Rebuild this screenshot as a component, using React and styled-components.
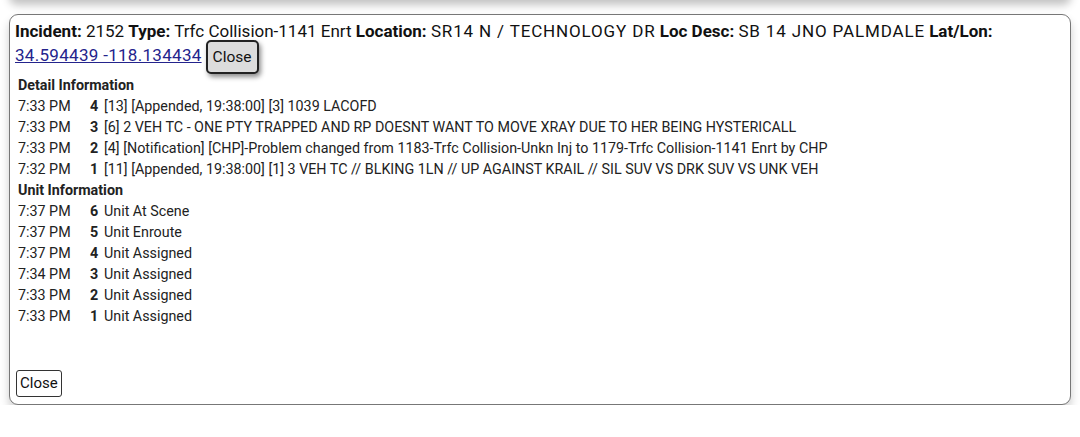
import React from "react";
import styled, { createGlobalStyle } from "styled-components";

const Global = createGlobalStyle`
  html, body { margin: 0; padding: 0; background: #fff; }
  body { font-family: Roboto, "Noto Sans", "Liberation Sans", sans-serif; color: #1a1a1a; overflow: hidden; }
`;

const Page = styled.div`
  display: flex;
  flex-direction: column;
  padding: 0 9px;
`;

const PrevPanel = styled.div`
  height: 30px;
  margin: -30px 0 0;
  background: #fff;
  border-radius: 8px;
  box-shadow: 0 5px 9px rgba(0, 0, 0, 0.24);
`;

const Panel = styled.section`
  margin-top: 14px;
  background: #fff;
  border: 1.5px solid #777;
  border-radius: 9px;
  box-shadow: 0 6px 10px rgba(0, 0, 0, 0.2);
  display: flex;
  flex-direction: column;
`;

const Header = styled.div`
  padding: 4px 5px 7px;
  font-size: 17px;
  line-height: 24px;
  color: #111;
`;

const Label = styled.b`
  font-weight: 700;
`;

const Caps = styled.span`
  letter-spacing: 0.85px;
`;

const Link = styled.a`
  color: #24248c;
  text-decoration: underline;
  white-space: nowrap;
  letter-spacing: 0.3px;
`;

const FocusButton = styled.button`
  box-sizing: border-box;
  font-family: Roboto, "Liberation Sans", sans-serif;
  font-size: 15.5px;
  height: 34px;
  padding: 0 5px;
  margin: -6px 0 -6px 4px;
  background: #dcdcdc;
  color: #111;
  border: 2px solid #222;
  border-radius: 5px;
  box-shadow: 2px 3px 5px rgba(0, 0, 0, 0.45);
  vertical-align: middle;
`;

const Details = styled.div`
  padding: 0 8px;
  display: flex;
  flex-direction: column;
  font-size: 14.3px;
  color: #222;
`;

const SectionTitle = styled.div`
  line-height: 21px;
  font-weight: 700;
`;

const Row = styled.div`
  display: grid;
  grid-template-columns: 72px 14px 1fr;
  line-height: 21px;
  white-space: nowrap;
`;

const Num = styled.span`
  font-weight: 700;
`;

const Footer = styled.div`
  padding: 43px 6px 7px;
`;

const PlainButton = styled.button`
  box-sizing: border-box;
  font-family: Roboto, "Liberation Sans", sans-serif;
  font-size: 15px;
  height: 27px;
  padding: 0 3px;
  background: #fff;
  color: #111;
  border: 1px solid #333;
  border-radius: 3px;
`;

const details = [
  ["7:33 PM", "4", "[13] [Appended, 19:38:00] [3] 1039 LACOFD"],
  ["7:33 PM", "3", "[6] 2 VEH TC - ONE PTY TRAPPED AND RP DOESNT WANT TO MOVE XRAY DUE TO HER BEING HYSTERICALL"],
  ["7:33 PM", "2", "[4] [Notification] [CHP]-Problem changed from 1183-Trfc Collision-Unkn Inj to 1179-Trfc Collision-1141 Enrt by CHP"],
  ["7:32 PM", "1", "[11] [Appended, 19:38:00] [1] 3 VEH TC // BLKING 1LN // UP AGAINST KRAIL // SIL SUV VS DRK SUV VS UNK VEH"],
];

const units = [
  ["7:37 PM", "6", "Unit At Scene"],
  ["7:37 PM", "5", "Unit Enroute"],
  ["7:37 PM", "4", "Unit Assigned"],
  ["7:34 PM", "3", "Unit Assigned"],
  ["7:33 PM", "2", "Unit Assigned"],
  ["7:33 PM", "1", "Unit Assigned"],
];

export default function App() {
  return (
    <>
      <Global />
      <Page>
        <PrevPanel />
        <Panel>
          <Header>
            <Label>Incident:</Label> 2152 <Label>Type:</Label> Trfc Collision-1141 Enrt{" "}
            <Label>Location:</Label> <Caps>SR14 N / TECHNOLOGY DR</Caps> <Label>Loc Desc:</Label>{" "}
            <Caps>SB 14 JNO PALMDALE</Caps> <Label>Lat/Lon:</Label>{" "}
            <Link href="#">34.594439 -118.134434</Link>
            <FocusButton>Close</FocusButton>
          </Header>
          <Details>
            <SectionTitle>Detail Information</SectionTitle>
            {details.map(([t, n, txt], i) => (
              <Row key={"d" + i}>
                <span>{t}</span>
                <Num>{n}</Num>
                <span>{txt}</span>
              </Row>
            ))}
            <SectionTitle>Unit Information</SectionTitle>
            {units.map(([t, n, txt], i) => (
              <Row key={"u" + i}>
                <span>{t}</span>
                <Num>{n}</Num>
                <span>{txt}</span>
              </Row>
            ))}
          </Details>
          <Footer>
            <PlainButton>Close</PlainButton>
          </Footer>
        </Panel>
      </Page>
    </>
  );
}
